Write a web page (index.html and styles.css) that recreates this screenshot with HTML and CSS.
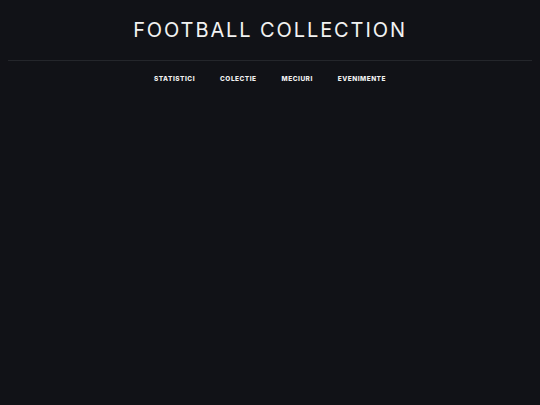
FILE: index.html
```html
<!DOCTYPE html>
<html lang="ro">
<head>
  <meta charset="UTF-8" />
  <title>Football Collection</title>
  <link rel="stylesheet" href="styles.css">
</head>
<body>
  <header class="site-header">
    <h1 class="site-title">FOOTBALL COLLECTION</h1>
  </header>

  <nav class="main-nav">
    <a href="#">Statistici</a>
    <a href="#">Colectie</a>
    <a href="#">Meciuri</a>
    <a href="#">Evenimente</a>
  </nav>
</body>
</html>
```

FILE: styles.css
```css
body {
  background: #111217;
  color: #f2f2f2;
  font-family: Inter, 'Noto Sans', sans-serif;
  margin: 0;
  padding: 0 8px;
}

.site-header {
  border-bottom: 1px solid #24262b;
  text-align: center;
  padding: 17px 0 16px;
}

.site-title {
  margin: 0;
  font-size: 20px;
  font-weight: 400;
  letter-spacing: 1.9px;
  line-height: 27px;
}

.main-nav {
  display: flex;
  justify-content: center;
  gap: 25px;
  padding: 14px 0;
}

.main-nav a {
  color: #f0f0f0;
  text-decoration: none;
  text-transform: uppercase;
  font-size: 6.5px;
  font-weight: 800;
  letter-spacing: 0.5px;
}
```
